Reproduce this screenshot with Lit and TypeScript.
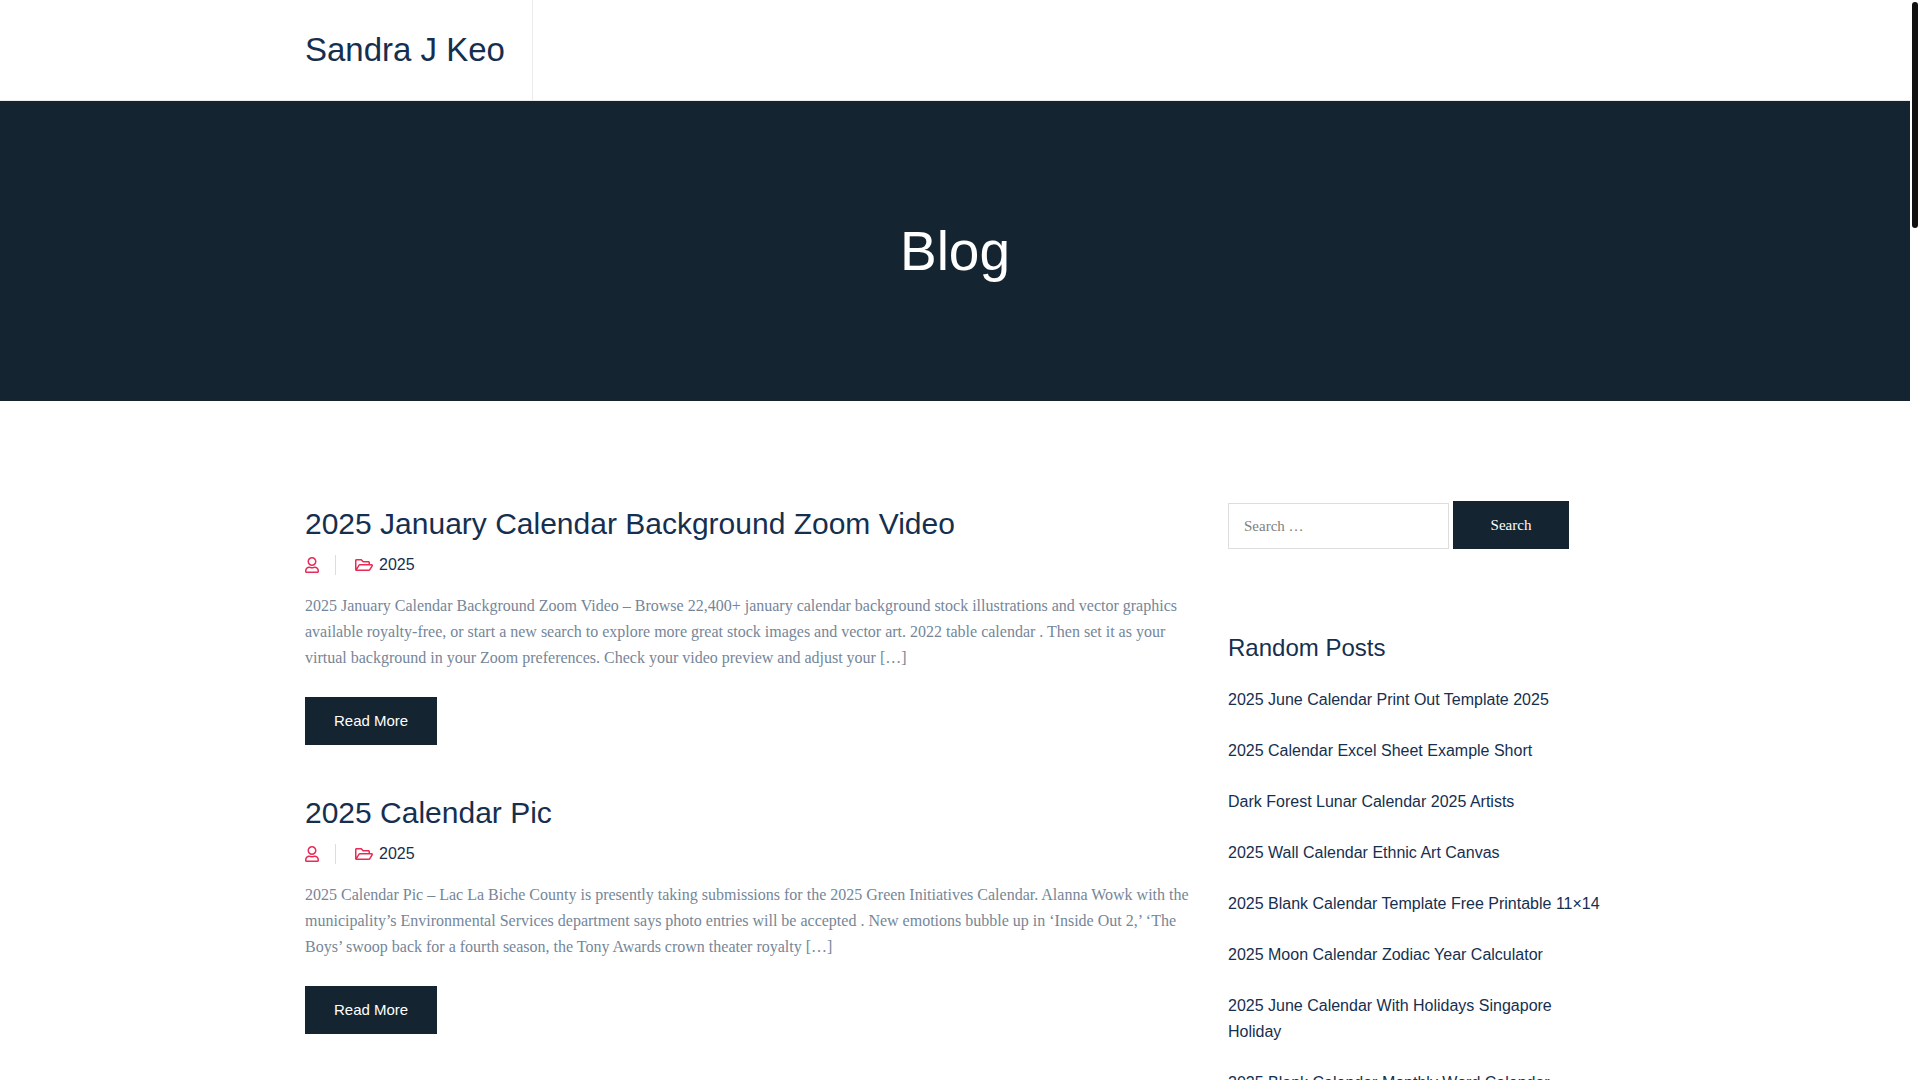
import { LitElement, html, css, svg } from "lit";
import { customElement } from "lit/decorators.js";

interface Post {
  title: string;
  category: string;
  excerpt: string;
}

const posts: Post[] = [
  {
    title: "2025 January Calendar Background Zoom Video",
    category: "2025",
    excerpt:
      "2025 January Calendar Background Zoom Video – Browse 22,400+ january calendar background stock illustrations and vector graphics available royalty-free, or start a new search to explore more great stock images and vector art. 2022 table calendar . Then set it as your virtual background in your Zoom preferences. Check your video preview and adjust your […]",
  },
  {
    title: "2025 Calendar Pic",
    category: "2025",
    excerpt:
      "2025 Calendar Pic – Lac La Biche County is presently taking submissions for the 2025 Green Initiatives Calendar. Alanna Wowk with the municipality’s Environmental Services department says photo entries will be accepted . New emotions bubble up in ‘Inside Out 2,’ ‘The Boys’ swoop back for a fourth season, the Tony Awards crown theater royalty […]",
  },
];

const randomPosts: string[] = [
  "2025 June Calendar Print Out Template 2025",
  "2025 Calendar Excel Sheet Example Short",
  "Dark Forest Lunar Calendar 2025 Artists",
  "2025 Wall Calendar Ethnic Art Canvas",
  "2025 Blank Calendar Template Free Printable 11×14",
  "2025 Moon Calendar Zodiac Year Calculator",
  "2025 June Calendar With Holidays Singapore Holiday",
  "2025 Blank Calendar Monthly Word Calendar",
];

const userPath = svg`<path d="M313.6 304c-28.7 0-42.5 16-89.6 16-47.1 0-60.8-16-89.6-16C60.2 304 0 364.2 0 438.4V464c0 26.5 21.5 48 48 48h352c26.5 0 48-21.5 48-48v-25.6c0-74.2-60.2-134.4-134.4-134.4zM400 464H48v-25.6c0-47.6 38.8-86.4 86.4-86.4 14.6 0 38.3 16 89.6 16 51.7 0 74.9-16 89.6-16 47.6 0 86.4 38.8 86.4 86.4V464zM224 288c79.5 0 144-64.5 144-144S303.5 0 224 0 80 64.5 80 144s64.5 144 144 144zm0-240c52.9 0 96 43.1 96 96s-43.1 96-96 96-96-43.1-96-96 43.1-96 96-96z"/>`;
const folderPath = svg`<path d="M527.9 224H480v-48c0-26.5-21.5-48-48-48H272l-64-64H48C21.5 64 0 85.5 0 112v288c0 26.5 21.5 48 48 48h400c16.5 0 31.9-8.5 40.7-22.6l79.9-128c20-31.9-3-73.4-40.7-73.4zM48 118c0-3.3 2.7-6 6-6h134.1l64 64H426c3.3 0 6 2.7 6 6v42H152c-16.8 0-32.4 8.8-41.1 23.2L48 351.4zm400 282H72l77.2-128H528z"/>`;

@customElement("app-root")
export class AppRoot extends LitElement {
  static styles = css`
    :host {
      --ink: #162f4f;
      --night: #142430;
      --accent: #e82a55;
      --line: #dddddd;
      --sans: "Liberation Sans", Arial, sans-serif;
      --serif: "Liberation Serif", "Times New Roman", serif;
      display: grid;
      grid-template-columns: minmax(0, 1fr) 10px;
      height: 100vh;
      overflow: hidden;
      background: #ffffff;
      color: #758698;
      font-family: var(--serif);
      font-size: 16px;
      line-height: 26px;
    }
    *,
    *::before,
    *::after {
      box-sizing: border-box;
    }
    h1,
    h2,
    p,
    ul {
      margin: 0;
      padding: 0;
      font-weight: 400;
    }
    a {
      color: inherit;
      text-decoration: none;
    }
    .page {
      min-width: 0;
      overflow-y: auto;
      scrollbar-width: none;
    }
    .container {
      max-width: 1330px;
      margin: 0 auto;
      padding: 0 15px;
    }
    .header {
      border-bottom: 1px solid #ebebeb;
    }
    .header .container {
      display: flex;
    }
    .brand {
      padding-right: 27px;
      border-right: 1px solid #ebebeb;
      color: var(--ink);
      font-family: var(--sans);
      font-size: 33px;
      line-height: 100px;
    }
    .hero {
      display: flex;
      align-items: center;
      justify-content: center;
      min-height: 300px;
      background: var(--night);
      color: #ffffff;
    }
    .hero h1 {
      font-family: var(--sans);
      font-size: 55px;
      line-height: 60px;
    }
    .content {
      display: grid;
      grid-template-columns: minmax(0, 1fr) 377px;
      gap: 38px;
      padding-top: 100px;
      padding-bottom: 100px;
    }
    .posts {
      display: flex;
      flex-direction: column;
      gap: 45px;
    }
    .post {
      display: flex;
      flex-direction: column;
      align-items: flex-start;
    }
    .post-title {
      margin-bottom: 6px;
      color: var(--ink);
      font-family: var(--sans);
      font-size: 30px;
      line-height: 45px;
    }
    .meta {
      display: flex;
      align-items: center;
      margin-bottom: 15px;
      color: var(--ink);
      font-family: var(--sans);
    }
    .author {
      display: flex;
      align-items: center;
      height: 20px;
      margin-right: 19px;
      padding-right: 16px;
      border-right: 1px solid var(--line);
    }
    .category {
      display: flex;
      align-items: center;
      gap: 6px;
    }
    .icon {
      display: block;
      height: 16px;
      fill: var(--accent);
    }
    .user {
      width: 14px;
    }
    .folder {
      width: 18px;
    }
    .more {
      margin-top: 26px;
      padding: 0 29px;
      background: var(--night);
      color: #ffffff;
      font-family: var(--sans);
      font-size: 15px;
      line-height: 48px;
    }
    .search {
      display: flex;
      align-items: flex-end;
      gap: 4px;
      margin-bottom: 80px;
    }
    .search input,
    .search button {
      margin: 0;
      border-radius: 0;
      font-family: var(--serif);
      font-size: 15px;
    }
    .search input {
      width: 221px;
      height: 46px;
      padding: 0 15px;
      border: 1px solid var(--line);
      background: #ffffff;
      color: #758698;
      outline: none;
    }
    .search input::placeholder {
      color: #808080;
      opacity: 1;
    }
    .search button {
      width: 116px;
      height: 48px;
      padding: 0;
      border: 0;
      background: var(--night);
      color: #ffffff;
      cursor: pointer;
    }
    .widget-title {
      margin-bottom: 20px;
      color: var(--ink);
      font-family: var(--sans);
      font-size: 24px;
      line-height: 38px;
    }
    .links {
      display: flex;
      flex-direction: column;
      gap: 25px;
      list-style: none;
      color: var(--ink);
      font-family: var(--sans);
    }
    .rail {
      padding: 2px;
    }
    .thumb {
      width: 6px;
      height: 21%;
      border-radius: 3px;
      background: #111111;
    }
  `;

  private renderPost(post: Post) {
    return html`
      <article class="post">
        <h2 class="post-title"><a href="#">${post.title}</a></h2>
        <div class="meta">
          <a class="author" href="#" aria-label="Author">
            <svg class="icon user" viewBox="0 0 448 512" aria-hidden="true">${userPath}</svg>
          </a>
          <a class="category" href="#">
            <svg class="icon folder" viewBox="0 0 576 512" aria-hidden="true">${folderPath}</svg>
            <span>${post.category}</span>
          </a>
        </div>
        <p>${post.excerpt}</p>
        <a class="more" href="#">Read More</a>
      </article>
    `;
  }

  render() {
    return html`
      <div class="page">
        <header class="header">
          <div class="container"><a class="brand" href="#">Sandra J Keo</a></div>
        </header>
        <section class="hero"><h1>Blog</h1></section>
        <div class="container content">
          <main class="posts">${posts.map((p) => this.renderPost(p))}</main>
          <aside>
            <form class="search" role="search" @submit=${(e: Event) => e.preventDefault()}>
              <input type="search" placeholder="Search …" aria-label="Search for:" />
              <button type="submit">Search</button>
            </form>
            <h2 class="widget-title">Random Posts</h2>
            <ul class="links">
              ${randomPosts.map((t) => html`<li><a href="#">${t}</a></li>`)}
            </ul>
          </aside>
        </div>
      </div>
      <div class="rail" aria-hidden="true"><div class="thumb"></div></div>
    `;
  }
}
